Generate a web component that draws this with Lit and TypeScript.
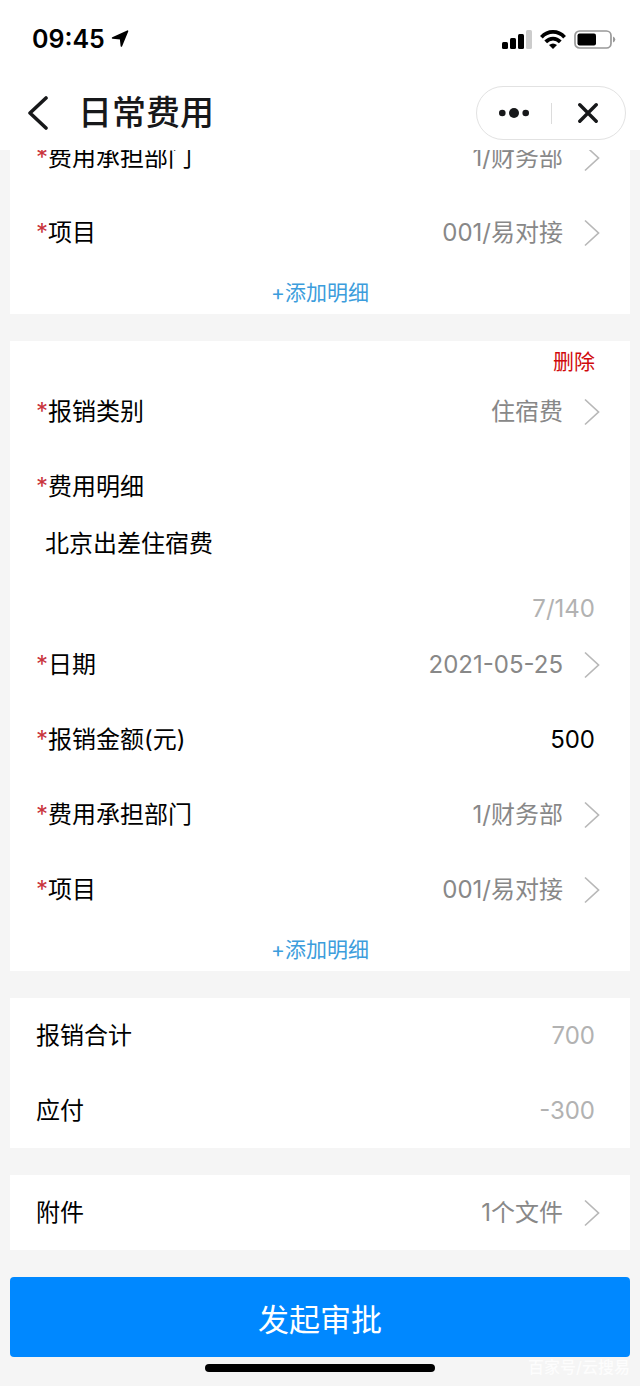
import { LitElement, html, css, nothing } from "lit";
import { customElement, property } from "lit/decorators.js";

const fontStack = css`Inter, "Noto Sans CJK SC", sans-serif`;

@customElement("status-bar")
class StatusBar extends LitElement {
  static styles = css`
    :host { display: flex; align-items: center; justify-content: space-between; height: 78px; padding: 0 24px 0 32px; }
    .time { display: flex; align-items: center; gap: 6px; font-size: 25px; line-height: 32px; font-weight: 600; color: #000; }
    .signals { display: flex; align-items: center; gap: 8px; }
    svg { display: block; }
  `;
  render() {
    return html`
      <div class="time">
        <span>09:45</span>
        <svg width="18" height="18" viewBox="0 0 18 18" aria-hidden="true">
          <path d="M16.5 1.2 L10.4 16 L9.6 8.6 L1.6 8 Z" fill="#000" stroke="#000" stroke-width="1.6" stroke-linejoin="round"/>
        </svg>
      </div>
      <div class="signals">
        <svg width="30" height="19" viewBox="0 0 30 19" aria-hidden="true">
          <rect x="0" y="12" width="6" height="7" rx="1.5"/>
          <rect x="8" y="8" width="6" height="11" rx="1.5"/>
          <rect x="16" y="4" width="6" height="15" rx="1.5"/>
          <rect x="24" y="0" width="6" height="19" rx="1.5" fill="#ccc"/>
        </svg>
        <svg width="26" height="19" viewBox="0 0 26 19" aria-hidden="true">
          <g fill="none" stroke="#000" stroke-width="3.8">
            <path d="M1.4 7.2 C8 .2 18 .2 24.6 7.2"/>
            <path d="M5.7 11.9 C10 7.5 16 7.5 20.3 11.9"/>
          </g>
          <path d="M9 15 Q13 11.8 17 15 L13 19Z"/>
        </svg>
        <svg width="42" height="19" viewBox="0 0 42 19" aria-hidden="true">
          <rect x="1" y="1" width="36" height="17" rx="4.5" fill="none" stroke="#999" stroke-width="1.7"/>
          <rect x="3.5" y="3.5" width="18.5" height="12" rx="2"/>
          <path d="M39 6.5 Q41.3 7.3 41.3 9.5 Q41.3 11.7 39 12.5Z" fill="#999"/>
        </svg>
      </div>
    `;
  }
}

@customElement("nav-bar")
class NavBar extends LitElement {
  @property() heading = "";
  static styles = css`
    :host { display: flex; align-items: center; height: 70px; padding: 0 14px 2px 24px; }
    button { display: flex; align-items: center; justify-content: center; margin: 0; padding: 0; border: 0; background: none; font: inherit; }
    .back { width: 28px; height: 44px; }
    h1 { flex: 1; margin: 0 0 0 26px; font-size: 34px; line-height: 46px; font-weight: 500; color: #17181a; }
    .capsule { display: flex; align-items: center; box-sizing: border-box; width: 150px; height: 54px; border: 1px solid #e2e2e2; border-radius: 27px; }
    .capsule button { flex: 1; height: 52px; }
    .rule { width: 1px; height: 21px; background: #dcdcdc; }
  `;
  render() {
    return html`
      <button class="back" aria-label="返回">
        <svg width="22" height="34" viewBox="0 0 22 34" aria-hidden="true">
          <path d="M19 2 L3 17 L19 32" fill="none" stroke="#17181a" stroke-width="3.6" stroke-linecap="round" stroke-linejoin="round"/>
        </svg>
      </button>
      <h1>${this.heading}</h1>
      <div class="capsule">
        <button aria-label="更多">
          <svg width="30" height="10" viewBox="0 0 30 10" fill="#17181a" aria-hidden="true">
            <circle cx="3.3" cy="5" r="3.3"/><circle cx="15" cy="5" r="5"/><circle cx="26.7" cy="5" r="3.3"/>
          </svg>
        </button>
        <span class="rule"></span>
        <button aria-label="关闭">
          <svg width="20" height="20" viewBox="0 0 20 20" aria-hidden="true">
            <path d="M1.8 1.8 L18.2 18.2 M18.2 1.8 L1.8 18.2" stroke="#17181a" stroke-width="3.4" stroke-linecap="round"/>
          </svg>
        </button>
      </div>
    `;
  }
}

type Kind = "picker" | "input" | "readonly";

@customElement("form-row")
class FormRow extends LitElement {
  @property() label = "";
  @property() value = "";
  @property() kind: Kind = "picker";
  @property({ type: Boolean }) required = false;
  static styles = css`
    :host { display: flex; align-items: center; justify-content: space-between; height: 75px; padding: 0 35px 0 26px; font-size: 24px; line-height: 36px; }
    label { flex: none; color: #000; }
    .star { color: #c9343c; }
    button { display: flex; align-items: center; gap: 21px; margin: 0 -5px 0 0; padding: 0; border: 0; background: none; font: inherit; color: #888; }
    input { flex: 1; min-width: 0; height: 36px; margin: 0; padding: 0; border: 0; outline: 0; background: none; font: inherit; color: #000; text-align: right; }
    output { color: #b2b2b2; }
    svg { display: block; }
  `;
  private control() {
    if (this.kind === "input") return html`<input id="field" inputmode="decimal" .value=${this.value} />`;
    if (this.kind === "readonly") return html`<output id="field">${this.value}</output>`;
    return html`<button id="field">
      <span>${this.value}</span>
      <svg width="16" height="28" viewBox="0 0 16 28" aria-hidden="true">
        <path d="M1 1.5 L14.5 14 L1 26.5" fill="none" stroke="#b8b8b8" stroke-width="1.7"/>
      </svg>
    </button>`;
  }
  render() {
    return html`
      <label for="field">${this.required ? html`<span class="star">*</span>` : nothing}${this.label}</label>
      ${this.control()}
    `;
  }
}

@customElement("app-root")
class AppRoot extends LitElement {
  static styles = css`
    :host { display: block; position: relative; min-height: 100vh; background: #f5f5f5; font-family: ${fontStack}; }
    header { position: sticky; top: 0; z-index: 1; background: #fff; }
    main { display: flex; flex-direction: column; gap: 27px; margin-top: -30px; padding: 0 10px; }
    section { display: flex; flex-direction: column; background: #fff; }
    button { margin: 0; border: 0; font: inherit; }
    .add { align-self: center; height: 44px; padding: 0 12px 2px; background: none; font-size: 21px; color: #3c9ddc; }
    .delete { align-self: flex-end; height: 33px; padding: 8px 35px 0; background: none; font-size: 21px; line-height: 25px; color: #d0090c; }
    .detail { display: flex; flex-direction: column; height: 178px; padding: 0 35px 0 26px; font-size: 24px; }
    .detail label { line-height: 76px; color: #000; }
    .star { color: #c9343c; }
    textarea { height: 67px; margin: 0; padding: 0 9px; border: 0; outline: 0; resize: none; background: none; font: inherit; line-height: 38px; color: #000; }
    .count { align-self: flex-end; line-height: 36px; color: #b2b2b2; }
    .submit { height: 80px; border-radius: 4px; background: #0088ff; font-size: 31px; color: #fff; }
    footer { display: flex; justify-content: center; padding: 7px 0 14px; }
    .home { width: 36%; height: 8px; border-radius: 4px; background: #000; }
    .mark { position: absolute; right: 10px; bottom: 6px; font-size: 16px; line-height: 26px; font-weight: 500; color: #fff; opacity: 0.8; }
  `;
  render() {
    return html`
      <header>
        <status-bar></status-bar>
        <nav-bar heading="日常费用"></nav-bar>
      </header>
      <main>
        <section>
          <form-row label="费用承担部门" value="1/财务部" required></form-row>
          <form-row label="项目" value="001/易对接" required></form-row>
          <button class="add">+添加明细</button>
        </section>
        <section>
          <button class="delete">删除</button>
          <form-row label="报销类别" value="住宿费" required></form-row>
          <div class="detail">
            <label for="detail"><span class="star">*</span>费用明细</label>
            <textarea id="detail" maxlength="140" .value=${"北京出差住宿费"}></textarea>
            <span class="count">7/140</span>
          </div>
          <form-row label="日期" value="2021-05-25" required></form-row>
          <form-row label="报销金额(元)" value="500" kind="input" required></form-row>
          <form-row label="费用承担部门" value="1/财务部" required></form-row>
          <form-row label="项目" value="001/易对接" required></form-row>
          <button class="add">+添加明细</button>
        </section>
        <section>
          <form-row label="报销合计" value="700" kind="readonly"></form-row>
          <form-row label="应付" value="-300" kind="readonly"></form-row>
        </section>
        <section>
          <form-row label="附件" value="1个文件"></form-row>
        </section>
        <button class="submit">发起审批</button>
      </main>
      <footer><span class="home"></span></footer>
      <span class="mark">百家号/云搜易</span>
    `;
  }
}
